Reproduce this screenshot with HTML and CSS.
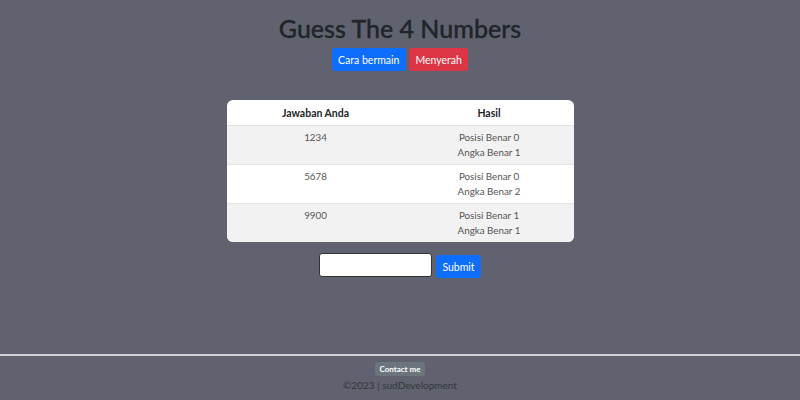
FILE: index.html
```html
<!DOCTYPE html>
<html>
<head>
<meta charset="utf-8">
<link rel="stylesheet" href="styles.css">
</head>
<body>
<div class="page">
  <main class="main">
    <h2 class="title">Guess The 4 Numbers</h2>
    <div class="actions">
      <button class="btn btn-primary">Cara bermain</button>
      <button class="btn btn-danger">Menyerah</button>
    </div>
    <div class="table-wrap">
      <table class="results">
        <thead>
          <tr><th class="col-a">Jawaban Anda</th><th>Hasil</th></tr>
        </thead>
        <tbody>
          <tr class="odd"><td>1234</td><td>Posisi Benar 0<br>Angka Benar 1</td></tr>
          <tr><td>5678</td><td>Posisi Benar 0<br>Angka Benar 2</td></tr>
          <tr class="odd"><td>9900</td><td>Posisi Benar 1<br>Angka Benar 1</td></tr>
        </tbody>
      </table>
    </div>
    <form class="guess" onsubmit="return false">
      <input class="guess-input" type="text">
      <button class="btn btn-primary btn-submit">Submit</button>
    </form>
  </main>
  <footer class="footer">
    <div class="rule"></div>
    <button class="btn btn-contact">Contact me</button>
    <p class="copy">©2023 | sudDevelopment</p>
  </footer>
</div>
</body>
</html>
```
FILE: styles.css
```css
* { box-sizing: border-box; }
html, body { margin: 0; padding: 0; }
body {
  background: #60636f;
  font-family: "Segoe UI", Lato, "Noto Sans", sans-serif;
  color: #212529;
}
.page {
  min-height: 400px;
  display: flex;
  flex-direction: column;
}
.main {
  display: flex;
  flex-direction: column;
  align-items: center;
  padding-top: 13px;
}
.title {
  margin: 0;
  font-size: 25px;
  font-weight: 500;
  line-height: 1.25;
  color: #212529;
  -webkit-text-stroke: 0.35px #212529;
}
.actions {
  display: flex;
  gap: 3px;
  margin-top: 4px;
}
.btn {
  border: none;
  font-family: inherit;
  color: #fff;
  border-radius: 3px;
  cursor: pointer;
}
.actions .btn {
  font-size: 10.5px;
  height: 23px;
  padding: 0 6.5px;
}
.btn-primary { background: #0d6efd; }
.btn-danger { background: #dc3545; }
.table-wrap {
  margin-top: 29px;
  width: 347px;
  background: #fff;
  border-radius: 6px;
  overflow: hidden;
}
.results {
  width: 100%;
  border-collapse: collapse;
  font-size: 9.8px;
  color: #555;
}
.results th {
  height: 25px;
  font-size: 10.5px;
  font-weight: 700;
  color: #212529;
  border-bottom: 1px solid #dee2e6;
  padding: 0;
}
.results th.col-a { width: 51.3%; }
.results td {
  height: 39px;
  text-align: center;
  vertical-align: top;
  padding: 4px 0 0;
  line-height: 15px;
  border-top: 1px solid #e3e3e3;
}
.results tbody tr:first-child td { border-top: none; }
.results tr.odd td { background: #f2f2f2; }
.guess {
  display: flex;
  align-items: center;
  gap: 4px;
  margin-top: 11px;
}
.guess-input {
  width: 113px;
  height: 24px;
  border: 1px solid #333;
  border-radius: 3px;
  background: #fff;
  margin-top: -2px;
}
.btn-submit {
  height: 23px;
  padding: 0 6px;
  font-size: 10.5px;
  margin-top: 2px;
}
.footer {
  margin-top: auto;
  display: flex;
  flex-direction: column;
  align-items: center;
}
.rule {
  width: 100%;
  height: 2px;
  background: #cfd0d4;
}
.btn-contact {
  margin-top: 6px;
  background: #6c757d;
  font-size: 8px;
  font-weight: 700;
  height: 14px;
  padding: 0 4px;
  border-radius: 3px;
}
.copy {
  margin: 2px 0 8px;
  font-size: 10px;
  color: #33353b;
  line-height: 14px;
}
```
